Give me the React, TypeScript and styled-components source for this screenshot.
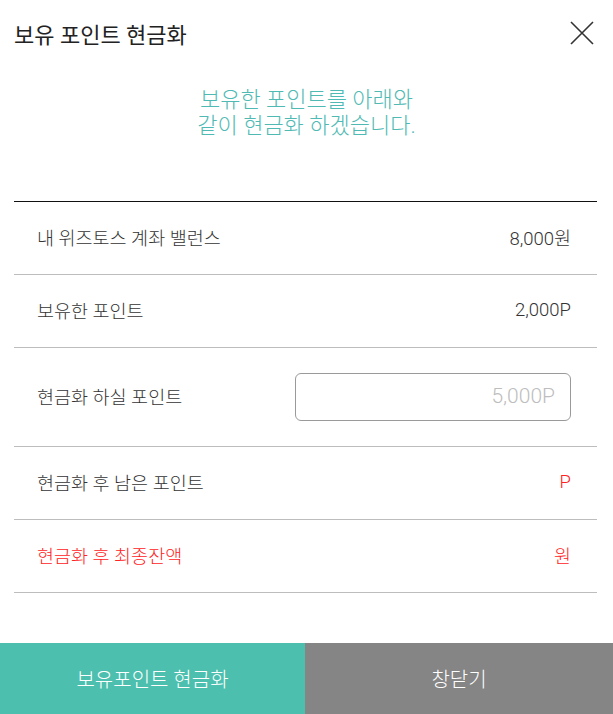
import styled, { createGlobalStyle } from 'styled-components'

const GlobalStyle = createGlobalStyle`
  html, body {
    margin: 0;
    padding: 0;
    background: #fff;
  }
  body {
    font-family: Roboto, "Noto Sans CJK KR", sans-serif;
  }
`

const Page = styled.div`
  width: 613px;
  height: 714px;
  display: flex;
  flex-direction: column;
  overflow: hidden;
`

const Header = styled.div`
  height: 66px;
  display: flex;
  align-items: center;
  justify-content: space-between;
  padding: 0 18px 0 14px;
`

const Title = styled.h1`
  margin: 0;
  font-size: 22px;
  font-weight: 400;
  color: #222;
`

const CloseButton = styled.button`
  border: 0;
  background: none;
  padding: 0;
  width: 26px;
  height: 26px;
  display: flex;
  cursor: pointer;
`

const Intro = styled.p`
  margin: 21px 0 0;
  height: 114px;
  text-align: center;
  font-size: 22px;
  font-weight: 300;
  line-height: 26px;
  color: #4fbab3;
`

const List = styled.div`
  margin: 0 16px 0 14px;
  border-top: 1px solid #111;
`

const Row = styled.div<{ $tall?: boolean }>`
  height: ${(p) => (p.$tall ? 99 : 73)}px;
  box-sizing: border-box;
  border-bottom: 1px solid #bdbdbd;
  display: flex;
  align-items: center;
  justify-content: space-between;
  padding: 0 26px 3px 23px;
  font-size: 18.5px;
  font-weight: 300;
  color: #333;
`

const Label = styled.span<{ $red?: boolean }>`
  color: ${(p) => (p.$red ? '#f22' : '#333')};
`

const Value = styled.span<{ $red?: boolean }>`
  color: ${(p) => (p.$red ? '#f22' : '#333')};
`

const Input = styled.input`
  width: 276px;
  height: 48px;
  margin-top: 3px;
  box-sizing: border-box;
  border: 1px solid #9a9a9a;
  border-radius: 6px;
  padding: 0 15px 2px;
  text-align: right;
  font-family: Roboto, "Noto Sans CJK KR", sans-serif;
  font-size: 21px;
  font-weight: 300;
  color: #333;
  outline: none;

  &::placeholder {
    color: #bdbdbd;
  }
`

const Footer = styled.div`
  margin-top: auto;
  height: 71px;
  display: grid;
  grid-template-columns: 305px 1fr;
`

const FooterButton = styled.button<{ $primary?: boolean }>`
  border: 0;
  margin: 0;
  background: ${(p) => (p.$primary ? '#4dbfae' : '#858585')};
  color: #fff;
  font-family: Roboto, "Noto Sans CJK KR", sans-serif;
  font-size: 20px;
  font-weight: 300;
  cursor: pointer;
`

export default function App() {
  return (
    <Page>
      <GlobalStyle />
      <Header>
        <Title>보유 포인트 현금화</Title>
        <CloseButton aria-label="닫기">
          <svg width="26" height="26" viewBox="0 0 26 26">
            <path d="M2 2 L24 24 M24 2 L2 24" stroke="#333" strokeWidth="1.6" fill="none" />
          </svg>
        </CloseButton>
      </Header>

      <Intro>
        보유한 포인트를 아래와
        <br />
        같이 현금화 하겠습니다.
      </Intro>

      <List>
        <Row>
          <Label>내 위즈토스 계좌 밸런스</Label>
          <Value>8,000원</Value>
        </Row>
        <Row>
          <Label>보유한 포인트</Label>
          <Value>2,000P</Value>
        </Row>
        <Row $tall>
          <Label>현금화 하실 포인트</Label>
          <Input placeholder="5,000P" />
        </Row>
        <Row>
          <Label>현금화 후 남은 포인트</Label>
          <Value $red>P</Value>
        </Row>
        <Row>
          <Label $red>현금화 후 최종잔액</Label>
          <Value $red>원</Value>
        </Row>
      </List>

      <Footer>
        <FooterButton $primary>보유포인트 현금화</FooterButton>
        <FooterButton>창닫기</FooterButton>
      </Footer>
    </Page>
  )
}
